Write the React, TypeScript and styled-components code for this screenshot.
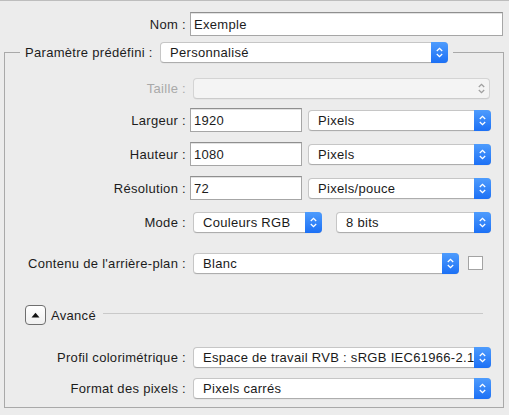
import React from "react";
import styled, { createGlobalStyle } from "styled-components";

const Global = createGlobalStyle`
  html, body { margin: 0; padding: 0; background: #ececec; }
  body {
    font-family: "Liberation Sans", Arial, sans-serif;
    font-size: 13px;
    letter-spacing: 0.3px;
    color: #1c1c1c;
  }
  * { box-sizing: border-box; }
`;

const Page = styled.div`
  width: 509px;
  height: 415px;
  border-top: 1px solid #bdbdbd;
  padding-top: 11px;
  overflow: hidden;
`;

const Row = styled.div<{ $mt?: number; $cols?: string }>`
  display: grid;
  grid-template-columns: ${(p) => p.$cols ?? "181px 1fr"};
  column-gap: 4px;
  align-items: center;
  height: 24px;
  margin-top: ${(p) => p.$mt ?? 0}px;
`;

const Label = styled.label<{ $disabled?: boolean }>`
  text-align: right;
  white-space: nowrap;
  color: ${(p) => (p.$disabled ? "#a9a9a9" : "#1c1c1c")};
`;

const Controls = styled.div<{ $gap?: number }>`
  display: flex;
  align-items: center;
  gap: ${(p) => p.$gap ?? 6}px;
`;

const TextField = styled.div<{ $w: number }>`
  width: ${(p) => p.$w}px;
  height: 24px;
  background: #fff;
  border: 1px solid #a6a6a6;
  border-top-color: #8f8f8f;
  box-shadow: inset 0 1px 0 #e2e2e2;
  padding: 0 3px;
  display: flex;
  align-items: center;
  white-space: nowrap;
`;

const SelectBox = styled.div<{ $w: number; $ml?: number; $disabled?: boolean }>`
  width: ${(p) => p.$w}px;
  height: 21px;
  margin-left: ${(p) => p.$ml ?? 0}px;
  display: flex;
  align-items: stretch;
  background: ${(p) => (p.$disabled ? "#f4f4f4" : "#fff")};
  border: 1px solid ${(p) => (p.$disabled ? "#d4d4d4" : "#c6c6c6")};
  border-bottom-color: ${(p) => (p.$disabled ? "#cbcbcb" : "#adadad")};
  border-radius: 4px;
  box-shadow: 0 0.5px 0 rgba(0, 0, 0, 0.06);
`;

const SelectText = styled.span`
  flex: 1;
  padding-left: 9px;
  display: flex;
  align-items: center;
  white-space: nowrap;
  overflow: hidden;
  color: #1a1a1a;
`;

const Stepper = styled.span<{ $disabled?: boolean }>`
  width: 17px;
  margin: -1px -1px -1px 0;
  display: flex;
  align-items: center;
  justify-content: center;
  border-radius: 0 4px 4px 0;
  background: ${(p) =>
    p.$disabled ? "transparent" : "linear-gradient(#4e9cfd, #1c70f5)"};
`;

const Checkbox = styled.span`
  width: 15px;
  height: 14px;
  background: #fff;
  border: 1px solid #a3a3a3;
  margin-left: 3px;
`;

const Fieldset = styled.fieldset`
  margin: 6px 5px 0 4px;
  padding: 0 0 7px 0;
  border: 1px solid #a9a9a9;
  min-width: 0;
`;

const Legend = styled.legend`
  margin-left: 15px;
  padding: 0 5px;
  display: flex;
  align-items: center;
  height: 21px;
`;

const LegendLabel = styled.span`
  width: 135px;
  white-space: nowrap;
`;

const GroupBody = styled.div`
  padding-top: 13px;
`;

const AdvancedRow = styled.div<{ $mt: number }>`
  display: flex;
  align-items: center;
  height: 24px;
  margin-top: ${(p) => p.$mt}px;
  padding: 0 20px;
`;

const Disclosure = styled.span`
  width: 21px;
  height: 20px;
  border: 1px solid #6f6f6f;
  border-radius: 4px;
  background: linear-gradient(#ffffff, #f0f0f0);
  display: flex;
  align-items: center;
  justify-content: center;
`;

const AdvancedText = styled.span`
  margin-left: 5px;
  white-space: nowrap;
`;

const Rule = styled.span`
  flex: 1;
  height: 1px;
  background: #c9c9c9;
  margin: 0 0 3px 7px;
`;

const Chevrons = ({ color }: { color: string }) => (
  <svg width="9" height="13" viewBox="0 0 9 13">
    <path d="M1.8 5 L4.5 2.3 L7.2 5" fill="none" stroke={color} strokeWidth="1.3" />
    <path d="M1.8 8 L4.5 10.7 L7.2 8" fill="none" stroke={color} strokeWidth="1.3" />
  </svg>
);

const Select = ({
  w,
  ml,
  text,
  disabled,
}: {
  w: number;
  ml?: number;
  text?: string;
  disabled?: boolean;
}) => (
  <SelectBox $w={w} $ml={ml} $disabled={disabled}>
    <SelectText>{text}</SelectText>
    <Stepper $disabled={disabled}>
      <Chevrons color={disabled ? "#a0a0a0" : "#ffffff"} />
    </Stepper>
  </SelectBox>
);

export default function App() {
  return (
    <>
      <Global />
      <Page>
        <Row $cols="186px 1fr">
          <Label>Nom :</Label>
          <TextField $w={313}>Exemple</TextField>
        </Row>
        <Fieldset>
          <Legend>
            <LegendLabel>Paramètre prédéfini :</LegendLabel>
            <Select w={288} text="Personnalisé" />
          </Legend>
          <GroupBody>
            <Row>
              <Label $disabled>Taille :</Label>
              <Controls>
                <Select w={297} ml={3} disabled />
              </Controls>
            </Row>
            <Row $mt={8}>
              <Label>Largeur :</Label>
              <Controls>
                <TextField $w={112}>1920</TextField>
                <Select w={183} text="Pixels" />
              </Controls>
            </Row>
            <Row $mt={10}>
              <Label>Hauteur :</Label>
              <Controls>
                <TextField $w={112}>1080</TextField>
                <Select w={183} text="Pixels" />
              </Controls>
            </Row>
            <Row $mt={10}>
              <Label>Résolution :</Label>
              <Controls>
                <TextField $w={112}>72</TextField>
                <Select w={183} text="Pixels/pouce" />
              </Controls>
            </Row>
            <Row $mt={10}>
              <Label>Mode :</Label>
              <Controls $gap={14}>
                <Select w={129} ml={3} text="Couleurs RGB" />
                <Select w={155} text="8 bits" />
              </Controls>
            </Row>
            <Row $mt={17}>
              <Label>Contenu de l'arrière-plan :</Label>
              <Controls>
                <Select w={266} ml={3} text="Blanc" />
                <Checkbox />
              </Controls>
            </Row>
            <AdvancedRow $mt={28}>
              <Disclosure>
                <svg width="9" height="6" viewBox="0 0 9 6">
                  <path d="M0.5 5.5 L4.5 0.8 L8.5 5.5 Z" fill="#111" />
                </svg>
              </Disclosure>
              <AdvancedText>Avancé</AdvancedText>
              <Rule />
            </AdvancedRow>
            <Row $mt={18}>
              <Label>Profil colorimétrique :</Label>
              <Controls>
                <Select w={298} ml={3} text="Espace de travail RVB : sRGB IEC61966-2.1" />
              </Controls>
            </Row>
            <Row $mt={7}>
              <Label>Format des pixels :</Label>
              <Controls>
                <Select w={298} ml={3} text="Pixels carrés" />
              </Controls>
            </Row>
          </GroupBody>
        </Fieldset>
      </Page>
    </>
  );
}
